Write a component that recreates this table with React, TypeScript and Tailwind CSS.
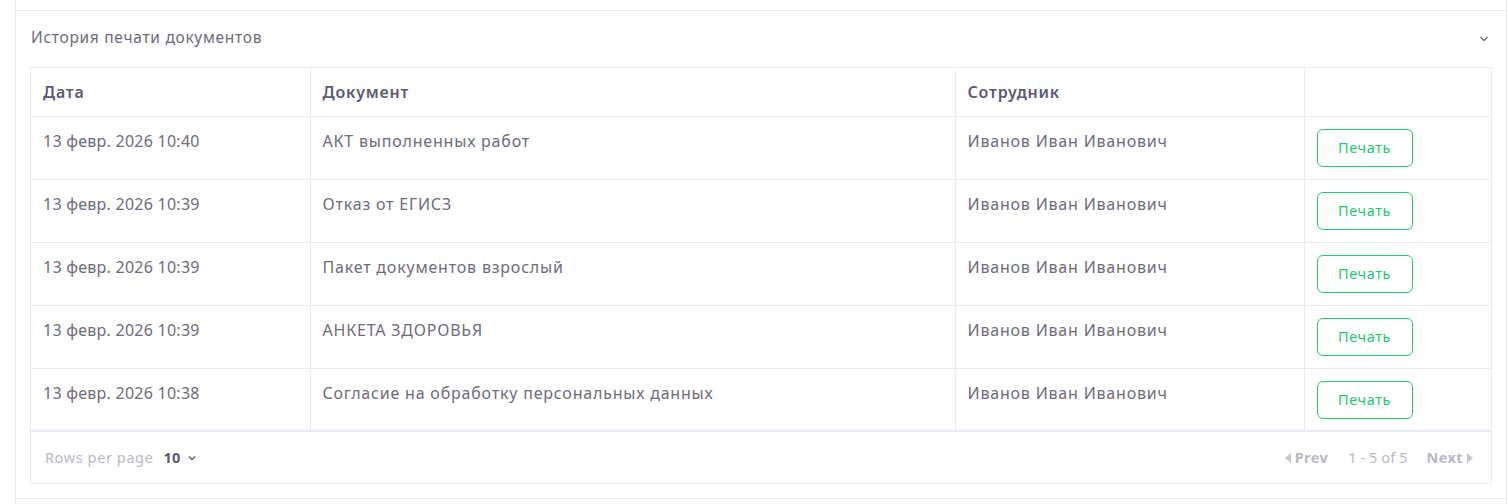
import React from "react";

const rows = [
  { date: "13 февр. 2026 10:40", doc: "АКТ выполненных работ" },
  { date: "13 февр. 2026 10:39", doc: "Отказ от ЕГИСЗ" },
  { date: "13 февр. 2026 10:39", doc: "Пакет документов взрослый" },
  { date: "13 февр. 2026 10:39", doc: "АНКЕТА ЗДОРОВЬЯ" },
  { date: "13 февр. 2026 10:38", doc: "Согласие на обработку персональных данных" },
];

const font = { fontFamily: '"Noto Sans", "Open Sans", sans-serif' };

export default function App() {
  return (
    <div className="w-[1508px] h-[504px] bg-white overflow-hidden" style={font}>
      <div className="ml-[15px] w-[1492px] border-x border-[#ebe9f1]">
        <div className="h-[10px]" />
        <div className="border-t border-[#ebe9f1] px-[14px] pb-[14px]">
          <div className="h-[56px] flex items-start justify-between pl-[1px] pt-[15px]">
            <span className="text-[15.5px] leading-[22px] tracking-[0.7px] text-[#6e6b7b]">История печати документов</span>
            <svg width="10" height="10" viewBox="0 0 10 10" className="mr-[3px] mt-[8px]">
              <path d="M1.5 3 L5 6.5 L8.5 3" fill="none" stroke="#6e6b7b" strokeWidth="1.4" />
            </svg>
          </div>
          <div className="border border-[#ebe9f1]">
            <table className="w-full border-collapse table-fixed">
              <colgroup>
                <col className="w-[279px]" />
                <col className="w-[645px]" />
                <col className="w-[349px]" />
                <col />
              </colgroup>
              <thead>
                <tr className="h-[48px]">
                  <th className="text-left font-semibold text-[16px] tracking-[0.8px] text-[#5e5873] px-[12px] border-r border-b border-[#ebe9f1]">Дата</th>
                  <th className="text-left font-semibold text-[16px] tracking-[0.8px] text-[#5e5873] px-[12px] border-r border-b border-[#ebe9f1]">Документ</th>
                  <th className="text-left font-semibold text-[16px] tracking-[0.8px] text-[#5e5873] px-[12px] border-r border-b border-[#ebe9f1]">Сотрудник</th>
                  <th className="border-b border-[#ebe9f1]" />
                </tr>
              </thead>
              <tbody>
                {rows.map((r, i) => (
                  <tr key={i} className="h-[63px]">
                    <td className={`align-top px-[12px] pt-[12px] text-[16px] leading-[24px] tracking-[0.25px] text-[#6e6b7b] border-r border-[#ebe9f1] ${i < rows.length - 1 ? "border-b" : "border-b-2"}`}>{r.date}</td>
                    <td className={`align-top px-[12px] pt-[12px] text-[16px] leading-[24px] tracking-[0.8px] text-[#6e6b7b] border-r border-[#ebe9f1] ${i < rows.length - 1 ? "border-b" : "border-b-2"}`}>{r.doc}</td>
                    <td className={`align-top px-[12px] pt-[12px] text-[16px] leading-[24px] tracking-[0.8px] text-[#6e6b7b] border-r border-[#ebe9f1] ${i < rows.length - 1 ? "border-b" : "border-b-2"}`}>Иванов Иван Иванович</td>
                    <td className={`align-top px-[12px] pt-[12px] border-[#ebe9f1] ${i < rows.length - 1 ? "border-b" : "border-b-2"}`}>
                      <button className="w-[96px] h-[38px] rounded-[6px] border border-[#28c76f] text-[#28c76f] text-[14.5px] tracking-[0.6px] bg-white">Печать</button>
                    </td>
                  </tr>
                ))}
              </tbody>
            </table>
            <div className="h-[51px] flex items-center justify-between pl-[14px] pr-[18px]">
              <div className="flex items-center text-[14.5px]">
                <span className="text-[#b9b9c3] tracking-[0.6px]">Rows per page</span>
                <span className="ml-[10px] font-bold text-[#5e5873] tracking-[0.3px]">10</span>
                <svg width="10" height="10" viewBox="0 0 10 10" className="ml-[6px]">
                  <path d="M2 3.5 L5 6.5 L8 3.5" fill="none" stroke="#5e5873" strokeWidth="1.3" />
                </svg>
              </div>
              <div className="flex items-center text-[14.5px] text-[#b9b9c3]">
                <svg width="6" height="10" viewBox="0 0 6 10"><path d="M6 0 L0 5 L6 10 Z" fill="#c5c5cc" /></svg>
                <span className="ml-[4px] font-bold tracking-[0.4px]">Prev</span>
                <span className="ml-[20px] tracking-[0.1px]">1 - 5 of 5</span>
                <span className="ml-[19px] font-bold tracking-[0.4px]">Next</span>
                <svg width="6" height="10" viewBox="0 0 6 10" className="ml-[4px]"><path d="M0 0 L6 5 L0 10 Z" fill="#c5c5cc" /></svg>
              </div>
            </div>
          </div>
        </div>
        <div className="border-t border-[#ebe9f1] h-[10px]" />
      </div>
    </div>
  );
}
